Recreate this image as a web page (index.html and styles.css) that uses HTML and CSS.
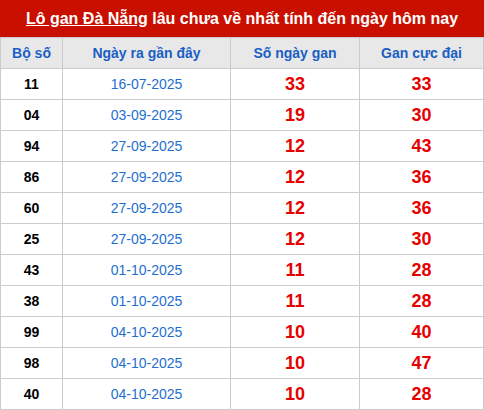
FILE: index.html
```html
<!DOCTYPE html>
<html lang="vi">
<head>
<meta charset="utf-8">
<link rel="stylesheet" href="styles.css">
</head>
<body>
<div class="box">
  <h2 class="title"><a href="#">Lô gan Đà Nẵng</a> lâu chưa về nhất tính đến ngày hôm nay</h2>
  <table class="gan">
    <thead>
      <tr><th class="c1">Bộ số</th><th class="c2">Ngày ra gần đây</th><th class="c3">Số ngày gan</th><th class="c4">Gan cực đại</th></tr>
    </thead>
    <tbody>
      <tr><td class="num">11</td><td class="date">16-07-2025</td><td class="red">33</td><td class="red">33</td></tr>
      <tr><td class="num">04</td><td class="date">03-09-2025</td><td class="red">19</td><td class="red">30</td></tr>
      <tr><td class="num">94</td><td class="date">27-09-2025</td><td class="red">12</td><td class="red">43</td></tr>
      <tr><td class="num">86</td><td class="date">27-09-2025</td><td class="red">12</td><td class="red">36</td></tr>
      <tr><td class="num">60</td><td class="date">27-09-2025</td><td class="red">12</td><td class="red">36</td></tr>
      <tr><td class="num">25</td><td class="date">27-09-2025</td><td class="red">12</td><td class="red">30</td></tr>
      <tr><td class="num">43</td><td class="date">01-10-2025</td><td class="red">11</td><td class="red">28</td></tr>
      <tr><td class="num">38</td><td class="date">01-10-2025</td><td class="red">11</td><td class="red">28</td></tr>
      <tr><td class="num">99</td><td class="date">04-10-2025</td><td class="red">10</td><td class="red">40</td></tr>
      <tr><td class="num">98</td><td class="date">04-10-2025</td><td class="red">10</td><td class="red">47</td></tr>
      <tr><td class="num">40</td><td class="date">04-10-2025</td><td class="red">10</td><td class="red">28</td></tr>
    </tbody>
  </table>
</div>
</body>
</html>
```

FILE: styles.css
```css
html, body {
  margin: 0;
  padding: 0;
  background: #fff;
}
body {
  font-family: "Liberation Sans", Arial, sans-serif;
}
.box {
  width: 484px;
}
.title {
  margin: 0;
  height: 37px;
  background: #c90f00;
  color: #fff;
  font-size: 16px;
  font-weight: bold;
  line-height: 37px;
  text-align: center;
  white-space: nowrap;
}
.title a {
  color: #fff;
  text-decoration: underline;
}
.gan {
  width: 484px;
  border-collapse: collapse;
  table-layout: fixed;
}
.gan th, .gan td {
  border: 1px solid #cccccc;
  height: 30px;
  padding: 0;
  text-align: center;
  vertical-align: middle;
}
.gan th {
  background: #e8e8e8;
  color: #1a5fc4;
  font-size: 14px;
  font-weight: bold;
}
.c1 { width: 61px; }
.c2 { width: 167px; }
.c3 { width: 128px; }
.num {
  color: #000;
  font-weight: bold;
  font-size: 14px;
}
.date {
  color: #1e6fd0;
  font-size: 14px;
}
.red {
  color: #e60000;
  font-weight: bold;
  font-size: 18px;
}
```
